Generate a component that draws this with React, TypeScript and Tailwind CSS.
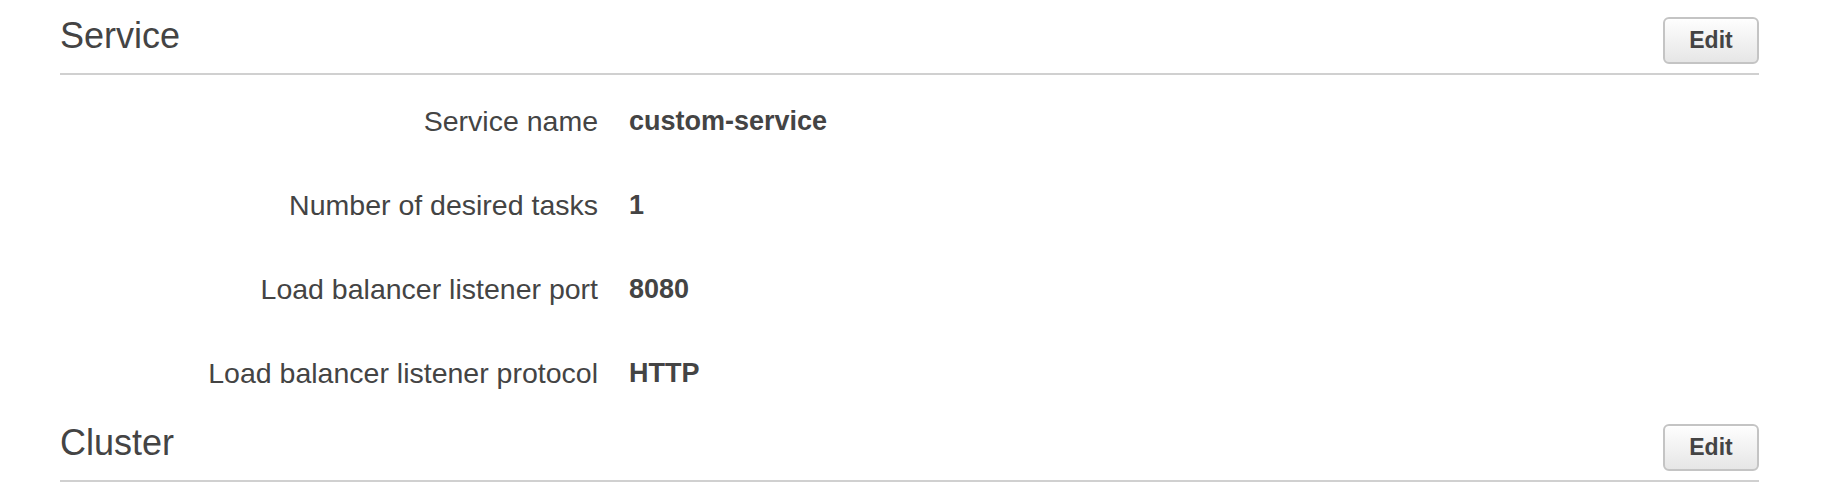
const serviceRows = [
  { label: "Service name", value: "custom-service" },
  { label: "Number of desired tasks", value: "1" },
  { label: "Load balancer listener port", value: "8080" },
  { label: "Load balancer listener protocol", value: "HTTP" },
];

function SectionHeader({ title }: { title: string }) {
  return (
    <div className="flex items-end justify-between border-b-2 border-[#d0d0d0] pb-[9px]">
      <h2 className="mb-[8px] text-[36px] leading-[40px] font-normal text-[#444]">{title}</h2>
      <button className="h-[47px] w-[96px] rounded-[6px] border-2 border-[#c4c4c4] bg-gradient-to-b from-[#fefefe] to-[#e6e6e6] text-[23px] font-bold text-[#444] shadow-[inset_0_1px_0_#fff]">
        Edit
      </button>
    </div>
  );
}

export default function App() {
  return (
    <div className="min-h-screen bg-white pl-[60px] pr-[85px] font-['Liberation_Sans',Arial,sans-serif]">
      {/* Service */}
      <section className="pt-[16px]">
        <SectionHeader title="Service" />
        <div className="flex flex-col gap-[52px] pt-[30px] pb-[18px]">
          {serviceRows.map((row) => (
            <div key={row.label} className="flex items-center gap-[31px] text-[#444] leading-[32px]">
              <div className="w-[538px] shrink-0 text-right text-[28.5px]">{row.label}</div>
              <div className="text-[27px] font-bold">{row.value}</div>
            </div>
          ))}
        </div>
      </section>

      {/* Cluster */}
      <section className="pt-[16px]">
        <SectionHeader title="Cluster" />
      </section>
    </div>
  );
}
